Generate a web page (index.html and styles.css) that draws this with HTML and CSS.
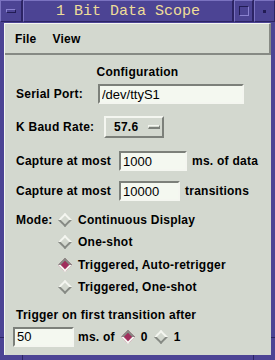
FILE: index.html
```html
<!DOCTYPE html>
<html lang="en">
<head>
    <meta charset="UTF-8">
    <title>1 Bit Data Scope</title>
    <link rel="stylesheet" href="styles.css">
</head>
<body>
    <div class="window">
        <!-- Title bar -->
        <div class="titlebar">
            <div class="tb-btn menu-btn"><span class="bar-icon"></span></div>
            <div class="tb-title">1 Bit Data Scope</div>
            <div class="tb-btn max-btn"><span class="sq-icon"></span></div>
            <div class="tb-btn min-btn"><span class="dot-icon"></span></div>
        </div>

        <div class="client">
            <!-- Menu bar -->
            <div class="menubar">
                <span class="menu-item">File</span>
                <span class="menu-item">View</span>
            </div>

            <div class="panel">
                <div class="heading">Configuration</div>

                <div class="row row-serial">
                    <span class="label w-serial">Serial Port:</span>
                    <input class="entry entry-serial" type="text" value="/dev/ttyS1">
                </div>

                <div class="row row-baud">
                    <span class="label w-baud">K Baud Rate:</span>
                    <div class="optbutton">
                        <span>57.6</span>
                        <span class="opt-ind"></span>
                    </div>
                </div>

                <div class="row row-cap1">
                    <span class="label w-cap">Capture at most</span>
                    <input class="entry entry-cap1" type="text" value="1000">
                    <span class="label">ms. of data</span>
                </div>

                <div class="row row-cap2">
                    <span class="label w-cap">Capture at most</span>
                    <input class="entry entry-cap2" type="text" value="10000">
                    <span class="label">transitions</span>
                </div>

                <div class="modes">
                    <div class="mode-row">
                        <span class="label w-mode">Mode:</span>
                        <span class="radio"></span>
                        <span class="label">Continuous Display</span>
                    </div>
                    <div class="mode-row">
                        <span class="label w-mode"></span>
                        <span class="radio"></span>
                        <span class="label">One-shot</span>
                    </div>
                    <div class="mode-row">
                        <span class="label w-mode"></span>
                        <span class="radio on"></span>
                        <span class="label">Triggered, Auto-retrigger</span>
                    </div>
                    <div class="mode-row">
                        <span class="label w-mode"></span>
                        <span class="radio"></span>
                        <span class="label">Triggered, One-shot</span>
                    </div>
                </div>

                <div class="trigger-label">Trigger on first transition after</div>

                <div class="row row-trig">
                    <input class="entry entry-trig" type="text" value="50">
                    <span class="label ms-of">ms. of</span>
                    <span class="radio on"></span>
                    <span class="label bit">0</span>
                    <span class="radio"></span>
                    <span class="label bit">1</span>
                </div>
            </div>
        </div>

        <!-- frame resize handle notches -->
        <span class="notch notch-bl"></span>
        <span class="notch notch-br"></span>
        <span class="notch notch-lb"></span>
        <span class="notch notch-rb"></span>
    </div>
</body>
</html>
```

FILE: styles.css
```css
/* Motif style window */
body {
    margin: 0;
    padding: 0;
    background: #d3d8cf;
    font-family: 'Liberation Sans', Arial, sans-serif;
}

.window {
    position: relative;
    width: 275px;
    height: 360px;
    box-sizing: border-box;
    padding: 0 4px 5px 4px;
    background: #4c4494;
    display: flex;
    flex-direction: column;
}

/* Title bar */
.titlebar {
    display: flex;
    gap: 1px;
    height: 22px;
    margin: 0 -4px 1px -4px;
    background: #2c2464;
}

.tb-btn, .tb-title {
    box-sizing: border-box;
    background: #4c4494;
    border-top: 1px solid #7a72c0;
    border-left: 1px solid #7a72c0;
    border-bottom: 1px solid #2c2464;
    border-right: 1px solid #2c2464;
    display: flex;
    align-items: center;
    justify-content: center;
}

.menu-btn { width: 22px; }
.max-btn { width: 19px; }
.min-btn { width: 21px; }

.tb-title {
    width: 210px;
    color: #eedd99;
    font-family: 'Liberation Mono', 'DejaVu Sans Mono', monospace;
    font-size: 15px;
    padding-top: 1px;
}

.bar-icon {
    width: 10px;
    height: 4px;
    box-sizing: border-box;
    border-top: 1px solid #8a82d0;
    border-left: 1px solid #8a82d0;
    border-bottom: 1px solid #221c55;
    border-right: 1px solid #221c55;
}

.sq-icon {
    width: 10px;
    height: 10px;
    box-sizing: border-box;
    border-top: 1px solid #221c55;
    border-left: 1px solid #221c55;
    border-bottom: 1px solid #8a82d0;
    border-right: 1px solid #8a82d0;
}

.dot-icon {
    width: 3px;
    height: 3px;
    background: #221c55;
}

.notch {
    position: absolute;
    background: #2c2464;
}

.notch-bl { left: 22px; bottom: 0; width: 1px; height: 5px; }
.notch-br { left: 253px; bottom: 0; width: 1px; height: 5px; }
.notch-lb { left: 0; top: 337px; width: 4px; height: 1px; }
.notch-rb { right: 0; top: 337px; width: 4px; height: 1px; }

/* Client area */
.client {
    flex: 1;
    display: flex;
    flex-direction: column;
    background: #d3d8cf;
    border-left: 1px solid #f4f6f0;
}

.menubar {
    height: 32px;
    box-sizing: border-box;
    display: flex;
    align-items: center;
    padding-left: 10px;
    border-top: 1px solid #f4f6f0;
    border-bottom: 2px solid #868a84;
    border-right: 2px solid #868a84;
    font-weight: bold;
    font-size: 12px;
    letter-spacing: 0.2px;
}

.menu-item {
    margin-right: 16px;
}

.panel {
    padding-left: 11px;
    font-size: 12px;
    font-weight: bold;
    letter-spacing: 0.25px;
    color: #000;
}

.heading {
    height: 14px;
    line-height: 14px;
    margin-top: 10px;
    text-align: center;
    padding-right: 12px;
}

.row {
    display: flex;
    align-items: center;
}

.row-serial { height: 20px; margin-top: 5px; }
.row-baud { height: 22px; margin-top: 12px; }
.row-cap1 { height: 20px; margin-top: 13px; }
.row-cap2 { height: 20px; margin-top: 10px; }

.w-serial { width: 82px; }
.w-baud { width: 88px; }
.w-cap { width: 103px; }
.w-mode { width: 42px; }

.entry {
    box-sizing: border-box;
    height: 20px;
    padding: 0 0 0 2px;
    margin: 0;
    background: #f4f8f0;
    border-top: 2px solid #7c807a;
    border-left: 2px solid #7c807a;
    border-bottom: 2px solid #f4f6f0;
    border-right: 2px solid #f4f6f0;
    font-family: 'Liberation Sans', Arial, sans-serif;
    font-size: 13px;
    color: #000;
    outline: none;
}

.entry-serial { width: 146px; }
.entry-cap1 { width: 68px; margin-right: 5px; }
.entry-cap2 { width: 61px; margin-right: 5px; }
.entry-trig { width: 61px; margin-left: -3px; margin-right: 4px; }

.optbutton {
    box-sizing: border-box;
    width: 60px;
    height: 22px;
    display: flex;
    align-items: center;
    padding-left: 8px;
    border-top: 2px solid #f4f6f0;
    border-left: 2px solid #f4f6f0;
    border-bottom: 2px solid #7c807a;
    border-right: 2px solid #7c807a;
}

.opt-ind {
    width: 12px;
    height: 4px;
    margin-left: 10px;
    box-sizing: border-box;
    border-top: 1px solid #f4f6f0;
    border-left: 1px solid #f4f6f0;
    border-bottom: 2px solid #7c807a;
    border-right: 1px solid #7c807a;
}

/* Radio diamonds */
.modes {
    margin-top: 8px;
}

.mode-row {
    display: flex;
    align-items: center;
    height: 22px;
    margin-bottom: 0.3px;
}

.radio {
    box-sizing: border-box;
    width: 10px;
    height: 10px;
    margin: 0 8px 0 2px;
    transform: rotate(45deg);
    border-top: 2px solid #f4f6f0;
    border-left: 2px solid #f4f6f0;
    border-bottom: 2px solid #868a84;
    border-right: 2px solid #868a84;
}

.radio.on {
    background: #a02e5c;
    border-top-color: #868a84;
    border-left-color: #868a84;
    border-bottom-color: #f4f6f0;
    border-right-color: #f4f6f0;
}

.trigger-label {
    height: 14px;
    line-height: 14px;
    margin-top: 10px;
}

.row-trig { height: 20px; margin-top: 5px; }

.ms-of { margin-right: 6px; }
.bit { margin-right: 6px; }
```
